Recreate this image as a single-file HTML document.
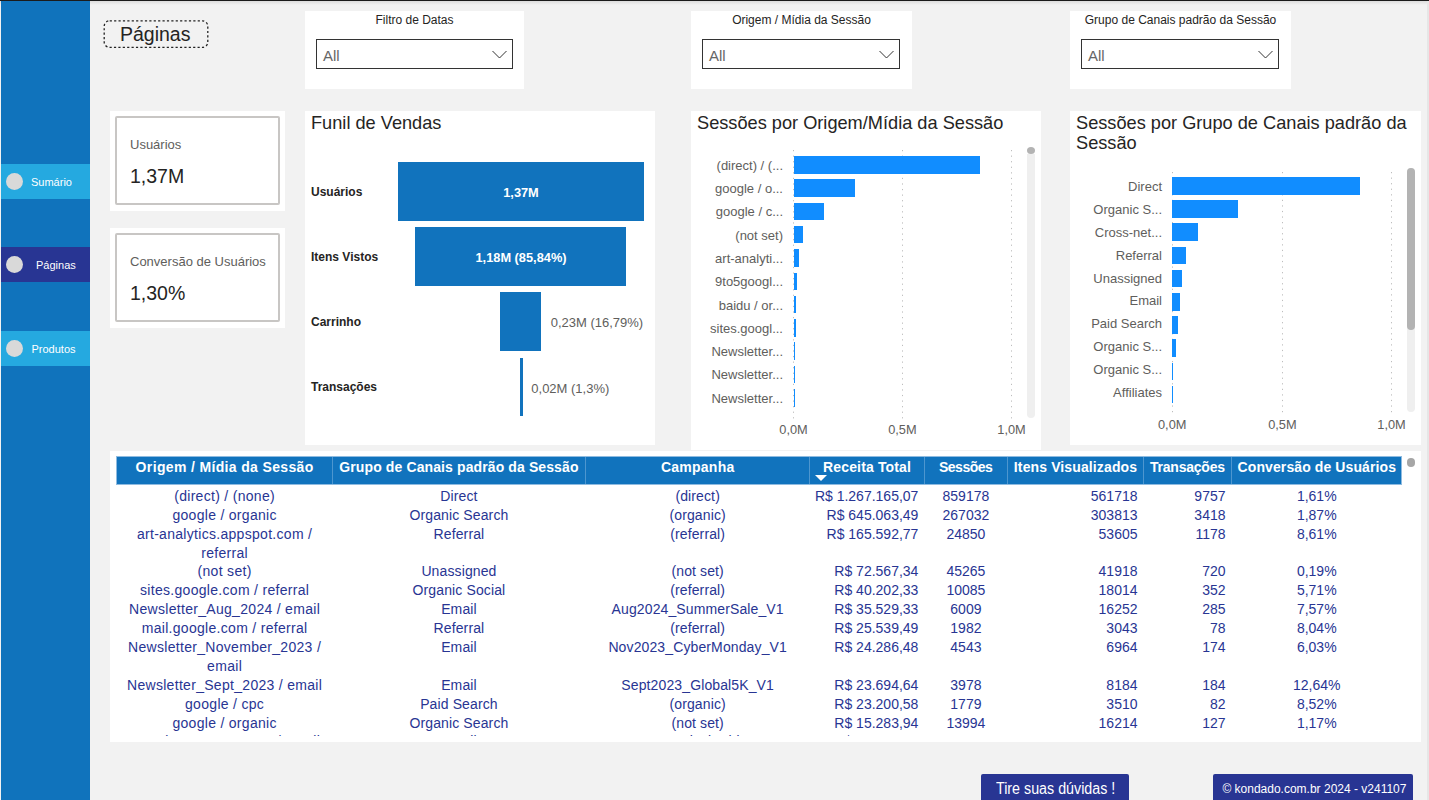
<!DOCTYPE html>
<html><head><meta charset="utf-8">
<style>
*{margin:0;padding:0;box-sizing:border-box}
html,body{width:1429px;height:800px;overflow:hidden;background:#f2f2f2;font-family:"Liberation Sans",sans-serif;position:relative}
.a{position:absolute}
.t{position:absolute;white-space:nowrap;line-height:1}
.card{position:absolute;background:#fff}
.nav{position:absolute;left:1px;width:89px;height:35px}
.nav .c{position:absolute;left:5px;top:9px;width:17px;height:17px;border-radius:50%;background:#d9d9d9}
</style></head><body>
<div class="a" style="left:0;top:0;width:1429px;height:1px;background:#1b1b1b"></div>
<div class="a" style="left:0;top:1px;width:1429px;height:4px;background:linear-gradient(#dcdcdc,#f2f2f2)"></div>
<div class="a" style="left:1427px;top:1px;width:2px;height:799px;background:#e6e6e6"></div>
<div class="a" style="left:1px;top:1px;width:89px;height:799px;background:#1073bc"></div>
<div class="nav" style="top:164px;background:#25a9e0"><div class="c"></div></div>
<div class="t" style="top:177px;font-size:11px;color:#fff;left:31px;">Sumário</div>
<div class="nav" style="top:247px;background:#283593"><div class="c"></div></div>
<div class="t" style="top:260px;font-size:11px;color:#fff;left:36px;">Páginas</div>
<div class="nav" style="top:331px;background:#25a9e0"><div class="c"></div></div>
<div class="t" style="top:344px;font-size:11px;color:#fff;left:31.5px;">Produtos</div>
<svg class="a" style="left:103px;top:20px" width="106" height="29" viewBox="0 0 106 29"><rect x="1.2" y="0.8" width="103.6" height="26.6" rx="5.5" fill="none" stroke="#222" stroke-width="1.3" stroke-dasharray="2.2 2.2"/></svg>
<div class="t" style="top:25px;font-size:19.5px;color:#252423;left:120px;">Páginas</div>
<div class="card" style="left:305px;top:11px;width:219px;height:78px"></div>
<div class="t" style="top:14px;font-size:12px;color:#252423;left:305px;width:219px;text-align:center;">Filtro de Datas</div>
<div class="a" style="left:316px;top:39px;width:197px;height:30px;border:1.5px solid #333;background:#fff"></div>
<div class="t" style="top:48px;font-size:15px;color:#666;left:323px;">All</div>
<svg class="a" style="left:492px;top:50px" width="15" height="9" viewBox="0 0 15 9"><path d="M0.5 1 L7.5 8 L14.5 1" fill="none" stroke="#333" stroke-width="1"/></svg>
<div class="card" style="left:691px;top:11px;width:221px;height:78px"></div>
<div class="t" style="top:14px;font-size:12px;color:#252423;left:691px;width:221px;text-align:center;">Origem / Mídia da Sessão</div>
<div class="a" style="left:702px;top:39px;width:198px;height:30px;border:1.5px solid #333;background:#fff"></div>
<div class="t" style="top:48px;font-size:15px;color:#666;left:709px;">All</div>
<svg class="a" style="left:879px;top:50px" width="15" height="9" viewBox="0 0 15 9"><path d="M0.5 1 L7.5 8 L14.5 1" fill="none" stroke="#333" stroke-width="1"/></svg>
<div class="card" style="left:1070px;top:11px;width:221px;height:78px"></div>
<div class="t" style="top:14px;font-size:12px;color:#252423;left:1070px;width:221px;text-align:center;">Grupo de Canais padrão da Sessão</div>
<div class="a" style="left:1081px;top:39px;width:198px;height:30px;border:1.5px solid #333;background:#fff"></div>
<div class="t" style="top:48px;font-size:15px;color:#666;left:1088px;">All</div>
<svg class="a" style="left:1258px;top:50px" width="15" height="9" viewBox="0 0 15 9"><path d="M0.5 1 L7.5 8 L14.5 1" fill="none" stroke="#333" stroke-width="1"/></svg>
<div class="card" style="left:110px;top:111px;width:175px;height:100px"></div>
<div class="a" style="left:115px;top:116px;width:165px;height:89px;border:2px solid #c8c6c4;border-radius:2px"></div>
<div class="t" style="top:138px;font-size:13px;color:#605e5c;left:130px;">Usuários</div>
<div class="t" style="top:167px;font-size:19.5px;color:#252423;left:130px;">1,37M</div>
<div class="card" style="left:110px;top:228px;width:175px;height:100px"></div>
<div class="a" style="left:115px;top:233px;width:165px;height:89px;border:2px solid #c8c6c4;border-radius:2px"></div>
<div class="t" style="top:255px;font-size:13px;color:#605e5c;left:130px;">Conversão de Usuários</div>
<div class="t" style="top:284px;font-size:19.5px;color:#252423;left:130px;">1,30%</div>
<div class="card" style="left:305px;top:111px;width:350px;height:334px"></div>
<div class="t" style="top:114px;font-size:18.2px;color:#252423;left:311px;">Funil de Vendas</div>
<div class="a" style="left:398px;top:162px;width:246px;height:59px;background:#1173bd"></div>
<div class="a" style="left:415px;top:227px;width:211px;height:59px;background:#1173bd"></div>
<div class="a" style="left:500px;top:292px;width:41px;height:59px;background:#1173bd"></div>
<div class="a" style="left:519.5px;top:358px;width:3px;height:58px;background:#1173bd"></div>
<div class="t" style="top:186px;font-size:12px;color:#252423;font-weight:700;left:311px;">Usuários</div>
<div class="t" style="top:251px;font-size:12px;color:#252423;font-weight:700;left:311px;">Itens Vistos</div>
<div class="t" style="top:316px;font-size:12px;color:#252423;font-weight:700;left:311px;">Carrinho</div>
<div class="t" style="top:381px;font-size:12px;color:#252423;font-weight:700;left:311px;">Transações</div>
<div class="t" style="top:187px;font-size:12.8px;color:#fff;font-weight:700;left:421px;width:200px;text-align:center;">1,37M</div>
<div class="t" style="top:252px;font-size:12.8px;color:#fff;font-weight:700;left:421px;width:200px;text-align:center;">1,18M (85,84%)</div>
<div class="t" style="top:316px;font-size:13px;color:#605e5c;left:550.7px;">0,23M (16,79%)</div>
<div class="t" style="top:382px;font-size:13px;color:#605e5c;left:531.3px;">0,02M (1,3%)</div>
<div class="card" style="left:691px;top:111px;width:350px;height:339px"></div>
<div class="t" style="top:114px;font-size:18.2px;color:#252423;left:697px;">Sessões por Origem/Mídia da Sessão</div>
<svg class="a" style="left:793px;top:149.70px" width="1" height="269" fill="#bdbdbd"><rect x="0" y="0.00" width="1" height="1.2"/><rect x="0" y="5.57" width="1" height="1.2"/><rect x="0" y="11.13" width="1" height="1.2"/><rect x="0" y="16.70" width="1" height="1.2"/><rect x="0" y="22.27" width="1" height="1.2"/><rect x="0" y="27.83" width="1" height="1.2"/><rect x="0" y="33.40" width="1" height="1.2"/><rect x="0" y="38.97" width="1" height="1.2"/><rect x="0" y="44.53" width="1" height="1.2"/><rect x="0" y="50.10" width="1" height="1.2"/><rect x="0" y="55.67" width="1" height="1.2"/><rect x="0" y="61.23" width="1" height="1.2"/><rect x="0" y="66.80" width="1" height="1.2"/><rect x="0" y="72.37" width="1" height="1.2"/><rect x="0" y="77.93" width="1" height="1.2"/><rect x="0" y="83.50" width="1" height="1.2"/><rect x="0" y="89.07" width="1" height="1.2"/><rect x="0" y="94.63" width="1" height="1.2"/><rect x="0" y="100.20" width="1" height="1.2"/><rect x="0" y="105.77" width="1" height="1.2"/><rect x="0" y="111.33" width="1" height="1.2"/><rect x="0" y="116.90" width="1" height="1.2"/><rect x="0" y="122.47" width="1" height="1.2"/><rect x="0" y="128.03" width="1" height="1.2"/><rect x="0" y="133.60" width="1" height="1.2"/><rect x="0" y="139.17" width="1" height="1.2"/><rect x="0" y="144.73" width="1" height="1.2"/><rect x="0" y="150.30" width="1" height="1.2"/><rect x="0" y="155.87" width="1" height="1.2"/><rect x="0" y="161.43" width="1" height="1.2"/><rect x="0" y="167.00" width="1" height="1.2"/><rect x="0" y="172.57" width="1" height="1.2"/><rect x="0" y="178.13" width="1" height="1.2"/><rect x="0" y="183.70" width="1" height="1.2"/><rect x="0" y="189.27" width="1" height="1.2"/><rect x="0" y="194.83" width="1" height="1.2"/><rect x="0" y="200.40" width="1" height="1.2"/><rect x="0" y="205.97" width="1" height="1.2"/><rect x="0" y="211.53" width="1" height="1.2"/><rect x="0" y="217.10" width="1" height="1.2"/><rect x="0" y="222.67" width="1" height="1.2"/><rect x="0" y="228.23" width="1" height="1.2"/><rect x="0" y="233.80" width="1" height="1.2"/><rect x="0" y="239.37" width="1" height="1.2"/><rect x="0" y="244.93" width="1" height="1.2"/><rect x="0" y="250.50" width="1" height="1.2"/><rect x="0" y="256.07" width="1" height="1.2"/><rect x="0" y="261.63" width="1" height="1.2"/><rect x="0" y="267.20" width="1" height="1.2"/></svg>
<svg class="a" style="left:902px;top:149.70px" width="1" height="269" fill="#bdbdbd"><rect x="0" y="0.00" width="1" height="1.2"/><rect x="0" y="5.57" width="1" height="1.2"/><rect x="0" y="11.13" width="1" height="1.2"/><rect x="0" y="16.70" width="1" height="1.2"/><rect x="0" y="22.27" width="1" height="1.2"/><rect x="0" y="27.83" width="1" height="1.2"/><rect x="0" y="33.40" width="1" height="1.2"/><rect x="0" y="38.97" width="1" height="1.2"/><rect x="0" y="44.53" width="1" height="1.2"/><rect x="0" y="50.10" width="1" height="1.2"/><rect x="0" y="55.67" width="1" height="1.2"/><rect x="0" y="61.23" width="1" height="1.2"/><rect x="0" y="66.80" width="1" height="1.2"/><rect x="0" y="72.37" width="1" height="1.2"/><rect x="0" y="77.93" width="1" height="1.2"/><rect x="0" y="83.50" width="1" height="1.2"/><rect x="0" y="89.07" width="1" height="1.2"/><rect x="0" y="94.63" width="1" height="1.2"/><rect x="0" y="100.20" width="1" height="1.2"/><rect x="0" y="105.77" width="1" height="1.2"/><rect x="0" y="111.33" width="1" height="1.2"/><rect x="0" y="116.90" width="1" height="1.2"/><rect x="0" y="122.47" width="1" height="1.2"/><rect x="0" y="128.03" width="1" height="1.2"/><rect x="0" y="133.60" width="1" height="1.2"/><rect x="0" y="139.17" width="1" height="1.2"/><rect x="0" y="144.73" width="1" height="1.2"/><rect x="0" y="150.30" width="1" height="1.2"/><rect x="0" y="155.87" width="1" height="1.2"/><rect x="0" y="161.43" width="1" height="1.2"/><rect x="0" y="167.00" width="1" height="1.2"/><rect x="0" y="172.57" width="1" height="1.2"/><rect x="0" y="178.13" width="1" height="1.2"/><rect x="0" y="183.70" width="1" height="1.2"/><rect x="0" y="189.27" width="1" height="1.2"/><rect x="0" y="194.83" width="1" height="1.2"/><rect x="0" y="200.40" width="1" height="1.2"/><rect x="0" y="205.97" width="1" height="1.2"/><rect x="0" y="211.53" width="1" height="1.2"/><rect x="0" y="217.10" width="1" height="1.2"/><rect x="0" y="222.67" width="1" height="1.2"/><rect x="0" y="228.23" width="1" height="1.2"/><rect x="0" y="233.80" width="1" height="1.2"/><rect x="0" y="239.37" width="1" height="1.2"/><rect x="0" y="244.93" width="1" height="1.2"/><rect x="0" y="250.50" width="1" height="1.2"/><rect x="0" y="256.07" width="1" height="1.2"/><rect x="0" y="261.63" width="1" height="1.2"/><rect x="0" y="267.20" width="1" height="1.2"/></svg>
<svg class="a" style="left:1011px;top:149.70px" width="1" height="269" fill="#bdbdbd"><rect x="0" y="0.00" width="1" height="1.2"/><rect x="0" y="5.57" width="1" height="1.2"/><rect x="0" y="11.13" width="1" height="1.2"/><rect x="0" y="16.70" width="1" height="1.2"/><rect x="0" y="22.27" width="1" height="1.2"/><rect x="0" y="27.83" width="1" height="1.2"/><rect x="0" y="33.40" width="1" height="1.2"/><rect x="0" y="38.97" width="1" height="1.2"/><rect x="0" y="44.53" width="1" height="1.2"/><rect x="0" y="50.10" width="1" height="1.2"/><rect x="0" y="55.67" width="1" height="1.2"/><rect x="0" y="61.23" width="1" height="1.2"/><rect x="0" y="66.80" width="1" height="1.2"/><rect x="0" y="72.37" width="1" height="1.2"/><rect x="0" y="77.93" width="1" height="1.2"/><rect x="0" y="83.50" width="1" height="1.2"/><rect x="0" y="89.07" width="1" height="1.2"/><rect x="0" y="94.63" width="1" height="1.2"/><rect x="0" y="100.20" width="1" height="1.2"/><rect x="0" y="105.77" width="1" height="1.2"/><rect x="0" y="111.33" width="1" height="1.2"/><rect x="0" y="116.90" width="1" height="1.2"/><rect x="0" y="122.47" width="1" height="1.2"/><rect x="0" y="128.03" width="1" height="1.2"/><rect x="0" y="133.60" width="1" height="1.2"/><rect x="0" y="139.17" width="1" height="1.2"/><rect x="0" y="144.73" width="1" height="1.2"/><rect x="0" y="150.30" width="1" height="1.2"/><rect x="0" y="155.87" width="1" height="1.2"/><rect x="0" y="161.43" width="1" height="1.2"/><rect x="0" y="167.00" width="1" height="1.2"/><rect x="0" y="172.57" width="1" height="1.2"/><rect x="0" y="178.13" width="1" height="1.2"/><rect x="0" y="183.70" width="1" height="1.2"/><rect x="0" y="189.27" width="1" height="1.2"/><rect x="0" y="194.83" width="1" height="1.2"/><rect x="0" y="200.40" width="1" height="1.2"/><rect x="0" y="205.97" width="1" height="1.2"/><rect x="0" y="211.53" width="1" height="1.2"/><rect x="0" y="217.10" width="1" height="1.2"/><rect x="0" y="222.67" width="1" height="1.2"/><rect x="0" y="228.23" width="1" height="1.2"/><rect x="0" y="233.80" width="1" height="1.2"/><rect x="0" y="239.37" width="1" height="1.2"/><rect x="0" y="244.93" width="1" height="1.2"/><rect x="0" y="250.50" width="1" height="1.2"/><rect x="0" y="256.07" width="1" height="1.2"/><rect x="0" y="261.63" width="1" height="1.2"/><rect x="0" y="267.20" width="1" height="1.2"/></svg>
<div class="a" style="left:793.5px;top:156.00px;width:186.80px;height:17.6px;background:#118dff"></div>
<div class="t" style="top:159px;font-size:13px;color:#605e5c;right:646px;">(direct) / (...</div>
<div class="a" style="left:793.5px;top:179.30px;width:61.50px;height:17.6px;background:#118dff"></div>
<div class="t" style="top:182px;font-size:13px;color:#605e5c;right:646px;">google / o...</div>
<div class="a" style="left:793.5px;top:202.60px;width:30.10px;height:17.6px;background:#118dff"></div>
<div class="t" style="top:205px;font-size:13px;color:#605e5c;right:646px;">google / c...</div>
<div class="a" style="left:793.5px;top:225.90px;width:9.90px;height:17.6px;background:#118dff"></div>
<div class="t" style="top:229px;font-size:13px;color:#605e5c;right:646px;">(not set)</div>
<div class="a" style="left:793.5px;top:249.20px;width:5.50px;height:17.6px;background:#118dff"></div>
<div class="t" style="top:252px;font-size:13px;color:#605e5c;right:646px;">art-analyti...</div>
<div class="a" style="left:793.5px;top:272.50px;width:3.50px;height:17.6px;background:#118dff"></div>
<div class="t" style="top:275px;font-size:13px;color:#605e5c;right:646px;">9to5googl...</div>
<div class="a" style="left:793.5px;top:295.80px;width:2.80px;height:17.6px;background:#118dff"></div>
<div class="t" style="top:299px;font-size:13px;color:#605e5c;right:646px;">baidu / or...</div>
<div class="a" style="left:793.5px;top:319.10px;width:2.30px;height:17.6px;background:#118dff"></div>
<div class="t" style="top:322px;font-size:13px;color:#605e5c;right:646px;">sites.googl...</div>
<div class="a" style="left:793.5px;top:342.40px;width:1.60px;height:17.6px;background:#118dff"></div>
<div class="t" style="top:345px;font-size:13px;color:#605e5c;right:646px;">Newsletter...</div>
<div class="a" style="left:793.5px;top:365.70px;width:1.50px;height:17.6px;background:#118dff"></div>
<div class="t" style="top:368px;font-size:13px;color:#605e5c;right:646px;">Newsletter...</div>
<div class="a" style="left:793.5px;top:389.00px;width:1.40px;height:17.6px;background:#118dff"></div>
<div class="t" style="top:392px;font-size:13px;color:#605e5c;right:646px;">Newsletter...</div>
<div class="t" style="top:424px;font-size:12.8px;color:#605e5c;left:743.5px;width:100px;text-align:center;">0,0M</div>
<div class="t" style="top:424px;font-size:12.8px;color:#605e5c;left:852.4px;width:100px;text-align:center;">0,5M</div>
<div class="t" style="top:424px;font-size:12.8px;color:#605e5c;left:961.5px;width:100px;text-align:center;">1,0M</div>
<div class="a" style="left:1027px;top:154px;width:8px;height:264px;background:#efefef;border-radius:0 0 4px 4px"></div>
<div class="a" style="left:1027px;top:147px;width:8px;height:7px;background:#b3b3b3;border-radius:50%"></div>
<div class="card" style="left:1070px;top:111px;width:351px;height:334px"></div>
<div class="t" style="top:114px;font-size:18.2px;color:#252423;left:1076px;">Sessões por Grupo de Canais padrão da</div>
<div class="t" style="top:134px;font-size:18.2px;color:#252423;left:1076px;">Sessão</div>
<svg class="a" style="left:1172px;top:172.40px" width="1" height="241" fill="#bdbdbd"><rect x="0" y="0.00" width="1" height="1.2"/><rect x="0" y="5.56" width="1" height="1.2"/><rect x="0" y="11.12" width="1" height="1.2"/><rect x="0" y="16.67" width="1" height="1.2"/><rect x="0" y="22.23" width="1" height="1.2"/><rect x="0" y="27.79" width="1" height="1.2"/><rect x="0" y="33.35" width="1" height="1.2"/><rect x="0" y="38.91" width="1" height="1.2"/><rect x="0" y="44.47" width="1" height="1.2"/><rect x="0" y="50.02" width="1" height="1.2"/><rect x="0" y="55.58" width="1" height="1.2"/><rect x="0" y="61.14" width="1" height="1.2"/><rect x="0" y="66.70" width="1" height="1.2"/><rect x="0" y="72.26" width="1" height="1.2"/><rect x="0" y="77.81" width="1" height="1.2"/><rect x="0" y="83.37" width="1" height="1.2"/><rect x="0" y="88.93" width="1" height="1.2"/><rect x="0" y="94.49" width="1" height="1.2"/><rect x="0" y="100.05" width="1" height="1.2"/><rect x="0" y="105.60" width="1" height="1.2"/><rect x="0" y="111.16" width="1" height="1.2"/><rect x="0" y="116.72" width="1" height="1.2"/><rect x="0" y="122.28" width="1" height="1.2"/><rect x="0" y="127.84" width="1" height="1.2"/><rect x="0" y="133.40" width="1" height="1.2"/><rect x="0" y="138.95" width="1" height="1.2"/><rect x="0" y="144.51" width="1" height="1.2"/><rect x="0" y="150.07" width="1" height="1.2"/><rect x="0" y="155.63" width="1" height="1.2"/><rect x="0" y="161.19" width="1" height="1.2"/><rect x="0" y="166.74" width="1" height="1.2"/><rect x="0" y="172.30" width="1" height="1.2"/><rect x="0" y="177.86" width="1" height="1.2"/><rect x="0" y="183.42" width="1" height="1.2"/><rect x="0" y="188.98" width="1" height="1.2"/><rect x="0" y="194.53" width="1" height="1.2"/><rect x="0" y="200.09" width="1" height="1.2"/><rect x="0" y="205.65" width="1" height="1.2"/><rect x="0" y="211.21" width="1" height="1.2"/><rect x="0" y="216.77" width="1" height="1.2"/><rect x="0" y="222.33" width="1" height="1.2"/><rect x="0" y="227.88" width="1" height="1.2"/><rect x="0" y="233.44" width="1" height="1.2"/><rect x="0" y="239.00" width="1" height="1.2"/></svg>
<svg class="a" style="left:1282px;top:172.40px" width="1" height="241" fill="#bdbdbd"><rect x="0" y="0.00" width="1" height="1.2"/><rect x="0" y="5.56" width="1" height="1.2"/><rect x="0" y="11.12" width="1" height="1.2"/><rect x="0" y="16.67" width="1" height="1.2"/><rect x="0" y="22.23" width="1" height="1.2"/><rect x="0" y="27.79" width="1" height="1.2"/><rect x="0" y="33.35" width="1" height="1.2"/><rect x="0" y="38.91" width="1" height="1.2"/><rect x="0" y="44.47" width="1" height="1.2"/><rect x="0" y="50.02" width="1" height="1.2"/><rect x="0" y="55.58" width="1" height="1.2"/><rect x="0" y="61.14" width="1" height="1.2"/><rect x="0" y="66.70" width="1" height="1.2"/><rect x="0" y="72.26" width="1" height="1.2"/><rect x="0" y="77.81" width="1" height="1.2"/><rect x="0" y="83.37" width="1" height="1.2"/><rect x="0" y="88.93" width="1" height="1.2"/><rect x="0" y="94.49" width="1" height="1.2"/><rect x="0" y="100.05" width="1" height="1.2"/><rect x="0" y="105.60" width="1" height="1.2"/><rect x="0" y="111.16" width="1" height="1.2"/><rect x="0" y="116.72" width="1" height="1.2"/><rect x="0" y="122.28" width="1" height="1.2"/><rect x="0" y="127.84" width="1" height="1.2"/><rect x="0" y="133.40" width="1" height="1.2"/><rect x="0" y="138.95" width="1" height="1.2"/><rect x="0" y="144.51" width="1" height="1.2"/><rect x="0" y="150.07" width="1" height="1.2"/><rect x="0" y="155.63" width="1" height="1.2"/><rect x="0" y="161.19" width="1" height="1.2"/><rect x="0" y="166.74" width="1" height="1.2"/><rect x="0" y="172.30" width="1" height="1.2"/><rect x="0" y="177.86" width="1" height="1.2"/><rect x="0" y="183.42" width="1" height="1.2"/><rect x="0" y="188.98" width="1" height="1.2"/><rect x="0" y="194.53" width="1" height="1.2"/><rect x="0" y="200.09" width="1" height="1.2"/><rect x="0" y="205.65" width="1" height="1.2"/><rect x="0" y="211.21" width="1" height="1.2"/><rect x="0" y="216.77" width="1" height="1.2"/><rect x="0" y="222.33" width="1" height="1.2"/><rect x="0" y="227.88" width="1" height="1.2"/><rect x="0" y="233.44" width="1" height="1.2"/><rect x="0" y="239.00" width="1" height="1.2"/></svg>
<svg class="a" style="left:1391px;top:172.40px" width="1" height="241" fill="#bdbdbd"><rect x="0" y="0.00" width="1" height="1.2"/><rect x="0" y="5.56" width="1" height="1.2"/><rect x="0" y="11.12" width="1" height="1.2"/><rect x="0" y="16.67" width="1" height="1.2"/><rect x="0" y="22.23" width="1" height="1.2"/><rect x="0" y="27.79" width="1" height="1.2"/><rect x="0" y="33.35" width="1" height="1.2"/><rect x="0" y="38.91" width="1" height="1.2"/><rect x="0" y="44.47" width="1" height="1.2"/><rect x="0" y="50.02" width="1" height="1.2"/><rect x="0" y="55.58" width="1" height="1.2"/><rect x="0" y="61.14" width="1" height="1.2"/><rect x="0" y="66.70" width="1" height="1.2"/><rect x="0" y="72.26" width="1" height="1.2"/><rect x="0" y="77.81" width="1" height="1.2"/><rect x="0" y="83.37" width="1" height="1.2"/><rect x="0" y="88.93" width="1" height="1.2"/><rect x="0" y="94.49" width="1" height="1.2"/><rect x="0" y="100.05" width="1" height="1.2"/><rect x="0" y="105.60" width="1" height="1.2"/><rect x="0" y="111.16" width="1" height="1.2"/><rect x="0" y="116.72" width="1" height="1.2"/><rect x="0" y="122.28" width="1" height="1.2"/><rect x="0" y="127.84" width="1" height="1.2"/><rect x="0" y="133.40" width="1" height="1.2"/><rect x="0" y="138.95" width="1" height="1.2"/><rect x="0" y="144.51" width="1" height="1.2"/><rect x="0" y="150.07" width="1" height="1.2"/><rect x="0" y="155.63" width="1" height="1.2"/><rect x="0" y="161.19" width="1" height="1.2"/><rect x="0" y="166.74" width="1" height="1.2"/><rect x="0" y="172.30" width="1" height="1.2"/><rect x="0" y="177.86" width="1" height="1.2"/><rect x="0" y="183.42" width="1" height="1.2"/><rect x="0" y="188.98" width="1" height="1.2"/><rect x="0" y="194.53" width="1" height="1.2"/><rect x="0" y="200.09" width="1" height="1.2"/><rect x="0" y="205.65" width="1" height="1.2"/><rect x="0" y="211.21" width="1" height="1.2"/><rect x="0" y="216.77" width="1" height="1.2"/><rect x="0" y="222.33" width="1" height="1.2"/><rect x="0" y="227.88" width="1" height="1.2"/><rect x="0" y="233.44" width="1" height="1.2"/><rect x="0" y="239.00" width="1" height="1.2"/></svg>
<div class="a" style="left:1172.2px;top:177.00px;width:187.70px;height:17.6px;background:#118dff"></div>
<div class="t" style="top:180px;font-size:13px;color:#605e5c;right:267px;">Direct</div>
<div class="a" style="left:1172.2px;top:200.20px;width:65.70px;height:17.6px;background:#118dff"></div>
<div class="t" style="top:203px;font-size:13px;color:#605e5c;right:267px;">Organic S...</div>
<div class="a" style="left:1172.2px;top:223.40px;width:25.40px;height:17.6px;background:#118dff"></div>
<div class="t" style="top:226px;font-size:13px;color:#605e5c;right:267px;">Cross-net...</div>
<div class="a" style="left:1172.2px;top:246.60px;width:13.60px;height:17.6px;background:#118dff"></div>
<div class="t" style="top:249px;font-size:13px;color:#605e5c;right:267px;">Referral</div>
<div class="a" style="left:1172.2px;top:269.80px;width:10.20px;height:17.6px;background:#118dff"></div>
<div class="t" style="top:272px;font-size:13px;color:#605e5c;right:267px;">Unassigned</div>
<div class="a" style="left:1172.2px;top:293.00px;width:7.60px;height:17.6px;background:#118dff"></div>
<div class="t" style="top:294px;font-size:13px;color:#605e5c;right:267px;">Email</div>
<div class="a" style="left:1172.2px;top:316.20px;width:5.60px;height:17.6px;background:#118dff"></div>
<div class="t" style="top:317px;font-size:13px;color:#605e5c;right:267px;">Paid Search</div>
<div class="a" style="left:1172.2px;top:339.40px;width:3.60px;height:17.6px;background:#118dff"></div>
<div class="t" style="top:340px;font-size:13px;color:#605e5c;right:267px;">Organic S...</div>
<div class="a" style="left:1172.2px;top:362.60px;width:1.20px;height:17.6px;background:#118dff"></div>
<div class="t" style="top:363px;font-size:13px;color:#605e5c;right:267px;">Organic S...</div>
<div class="a" style="left:1172.2px;top:385.80px;width:1.20px;height:17.6px;background:#118dff"></div>
<div class="t" style="top:386px;font-size:13px;color:#605e5c;right:267px;">Affiliates</div>
<div class="t" style="top:419px;font-size:12.8px;color:#605e5c;left:1122.2px;width:100px;text-align:center;">0,0M</div>
<div class="t" style="top:419px;font-size:12.8px;color:#605e5c;left:1232.4px;width:100px;text-align:center;">0,5M</div>
<div class="t" style="top:419px;font-size:12.8px;color:#605e5c;left:1341.5px;width:100px;text-align:center;">1,0M</div>
<div class="a" style="left:1407px;top:168px;width:8px;height:244px;background:#efefef;border-radius:4px"></div>
<div class="a" style="left:1407px;top:168px;width:8px;height:162px;background:#b3b3b3;border-radius:4px"></div>
<div class="card" style="left:110px;top:451px;width:1311px;height:291px"></div>
<div class="a" style="left:116px;top:456px;width:1286px;height:29px;background:#1173bd;border:1px solid #8fbbe0"></div>
<div class="a" style="left:332px;top:457px;width:1px;height:27px;background:#4d96cf"></div>
<div class="a" style="left:585px;top:457px;width:1px;height:27px;background:#4d96cf"></div>
<div class="a" style="left:809px;top:457px;width:1px;height:27px;background:#4d96cf"></div>
<div class="a" style="left:924px;top:457px;width:1px;height:27px;background:#4d96cf"></div>
<div class="a" style="left:1007px;top:457px;width:1px;height:27px;background:#4d96cf"></div>
<div class="a" style="left:1143px;top:457px;width:1px;height:27px;background:#4d96cf"></div>
<div class="a" style="left:1231px;top:457px;width:1px;height:27px;background:#4d96cf"></div>
<div class="t" style="top:460px;font-size:14px;color:#fff;font-weight:700;left:116.875px;width:215.5px;text-align:center;letter-spacing:0.35px;">Origem / Mídia da Sessão</div>
<div class="t" style="top:460px;font-size:14px;color:#fff;font-weight:700;left:332.255px;width:253.4px;text-align:center;letter-spacing:0.11px;">Grupo de Canais padrão da Sessão</div>
<div class="t" style="top:460px;font-size:14px;color:#fff;font-weight:700;left:585.725px;width:224.0px;text-align:center;letter-spacing:0.25px;">Campanha</div>
<div class="t" style="top:460px;font-size:14px;color:#fff;font-weight:700;left:809.6750000000001px;width:114.8px;text-align:center;letter-spacing:0.15px;">Receita Total</div>
<div class="t" style="top:460px;font-size:14px;color:#fff;font-weight:700;left:924.15px;width:83.0px;text-align:center;letter-spacing:-0.5px;">Sessões</div>
<div class="t" style="top:460px;font-size:14px;color:#fff;font-weight:700;left:1007.4599999999999px;width:136.1px;text-align:center;letter-spacing:0.12px;">Itens Visualizados</div>
<div class="t" style="top:460px;font-size:14px;color:#fff;font-weight:700;left:1143.395px;width:88.0px;text-align:center;letter-spacing:-0.21px;">Transações</div>
<div class="t" style="top:460px;font-size:14px;color:#fff;font-weight:700;left:1231.55px;width:170.5px;text-align:center;letter-spacing:0.1px;">Conversão de Usuários</div>
<svg class="a" style="left:815px;top:475px" width="12" height="6" viewBox="0 0 12 6"><path d="M0 0H12L6 6Z" fill="#fff"/></svg>
<div class="a" style="left:110px;top:486px;width:1300px;height:250px;overflow:hidden">
<div class="a" style="left:-110px;top:-486px;width:1429px;height:800px">
<div class="t" style="top:489px;font-size:14px;color:#283593;left:116.85000000000001px;width:215.5px;text-align:center;letter-spacing:0.3px;">(direct) / (none)</div>
<div class="t" style="top:489px;font-size:14px;color:#283593;left:332.26px;width:253.4px;text-align:center;letter-spacing:0.12px;">Direct</div>
<div class="t" style="top:489px;font-size:14px;color:#283593;left:585.66px;width:224.0px;text-align:center;letter-spacing:0.12px;">(direct)</div>
<div class="t" style="top:489px;font-size:14px;color:#283593;right:510.6px;">R$ 1.267.165,07</div>
<div class="t" style="top:489px;font-size:14px;color:#283593;left:924.4px;width:83.0px;text-align:center;">859178</div>
<div class="t" style="top:489px;font-size:14px;color:#283593;right:291.5px;">561718</div>
<div class="t" style="top:489px;font-size:14px;color:#283593;right:203.5px;">9757</div>
<div class="t" style="top:489px;font-size:14px;color:#283593;left:1231.5px;width:170.5px;text-align:center;">1,61%</div>
<div class="t" style="top:508px;font-size:14px;color:#283593;left:116.85000000000001px;width:215.5px;text-align:center;letter-spacing:0.3px;">google / organic</div>
<div class="t" style="top:508px;font-size:14px;color:#283593;left:332.26px;width:253.4px;text-align:center;letter-spacing:0.12px;">Organic Search</div>
<div class="t" style="top:508px;font-size:14px;color:#283593;left:585.66px;width:224.0px;text-align:center;letter-spacing:0.12px;">(organic)</div>
<div class="t" style="top:508px;font-size:14px;color:#283593;right:510.6px;">R$ 645.063,49</div>
<div class="t" style="top:508px;font-size:14px;color:#283593;left:924.4px;width:83.0px;text-align:center;">267032</div>
<div class="t" style="top:508px;font-size:14px;color:#283593;right:291.5px;">303813</div>
<div class="t" style="top:508px;font-size:14px;color:#283593;right:203.5px;">3418</div>
<div class="t" style="top:508px;font-size:14px;color:#283593;left:1231.5px;width:170.5px;text-align:center;">1,87%</div>
<div class="t" style="top:527px;font-size:14px;color:#283593;left:116.85000000000001px;width:215.5px;text-align:center;letter-spacing:0.3px;">art-analytics.appspot.com /</div>
<div class="t" style="top:546px;font-size:14px;color:#283593;left:116.85000000000001px;width:215.5px;text-align:center;letter-spacing:0.3px;">referral</div>
<div class="t" style="top:527px;font-size:14px;color:#283593;left:332.26px;width:253.4px;text-align:center;letter-spacing:0.12px;">Referral</div>
<div class="t" style="top:527px;font-size:14px;color:#283593;left:585.66px;width:224.0px;text-align:center;letter-spacing:0.12px;">(referral)</div>
<div class="t" style="top:527px;font-size:14px;color:#283593;right:510.6px;">R$ 165.592,77</div>
<div class="t" style="top:527px;font-size:14px;color:#283593;left:924.4px;width:83.0px;text-align:center;">24850</div>
<div class="t" style="top:527px;font-size:14px;color:#283593;right:291.5px;">53605</div>
<div class="t" style="top:527px;font-size:14px;color:#283593;right:203.5px;">1178</div>
<div class="t" style="top:527px;font-size:14px;color:#283593;left:1231.5px;width:170.5px;text-align:center;">8,61%</div>
<div class="t" style="top:564px;font-size:14px;color:#283593;left:116.85000000000001px;width:215.5px;text-align:center;letter-spacing:0.3px;">(not set)</div>
<div class="t" style="top:564px;font-size:14px;color:#283593;left:332.26px;width:253.4px;text-align:center;letter-spacing:0.12px;">Unassigned</div>
<div class="t" style="top:564px;font-size:14px;color:#283593;left:585.66px;width:224.0px;text-align:center;letter-spacing:0.12px;">(not set)</div>
<div class="t" style="top:564px;font-size:14px;color:#283593;right:510.6px;">R$ 72.567,34</div>
<div class="t" style="top:564px;font-size:14px;color:#283593;left:924.4px;width:83.0px;text-align:center;">45265</div>
<div class="t" style="top:564px;font-size:14px;color:#283593;right:291.5px;">41918</div>
<div class="t" style="top:564px;font-size:14px;color:#283593;right:203.5px;">720</div>
<div class="t" style="top:564px;font-size:14px;color:#283593;left:1231.5px;width:170.5px;text-align:center;">0,19%</div>
<div class="t" style="top:583px;font-size:14px;color:#283593;left:116.85000000000001px;width:215.5px;text-align:center;letter-spacing:0.3px;">sites.google.com / referral</div>
<div class="t" style="top:583px;font-size:14px;color:#283593;left:332.26px;width:253.4px;text-align:center;letter-spacing:0.12px;">Organic Social</div>
<div class="t" style="top:583px;font-size:14px;color:#283593;left:585.66px;width:224.0px;text-align:center;letter-spacing:0.12px;">(referral)</div>
<div class="t" style="top:583px;font-size:14px;color:#283593;right:510.6px;">R$ 40.202,33</div>
<div class="t" style="top:583px;font-size:14px;color:#283593;left:924.4px;width:83.0px;text-align:center;">10085</div>
<div class="t" style="top:583px;font-size:14px;color:#283593;right:291.5px;">18014</div>
<div class="t" style="top:583px;font-size:14px;color:#283593;right:203.5px;">352</div>
<div class="t" style="top:583px;font-size:14px;color:#283593;left:1231.5px;width:170.5px;text-align:center;">5,71%</div>
<div class="t" style="top:602px;font-size:14px;color:#283593;left:116.85000000000001px;width:215.5px;text-align:center;letter-spacing:0.3px;">Newsletter_Aug_2024 / email</div>
<div class="t" style="top:602px;font-size:14px;color:#283593;left:332.26px;width:253.4px;text-align:center;letter-spacing:0.12px;">Email</div>
<div class="t" style="top:602px;font-size:14px;color:#283593;left:585.66px;width:224.0px;text-align:center;letter-spacing:0.12px;">Aug2024_SummerSale_V1</div>
<div class="t" style="top:602px;font-size:14px;color:#283593;right:510.6px;">R$ 35.529,33</div>
<div class="t" style="top:602px;font-size:14px;color:#283593;left:924.4px;width:83.0px;text-align:center;">6009</div>
<div class="t" style="top:602px;font-size:14px;color:#283593;right:291.5px;">16252</div>
<div class="t" style="top:602px;font-size:14px;color:#283593;right:203.5px;">285</div>
<div class="t" style="top:602px;font-size:14px;color:#283593;left:1231.5px;width:170.5px;text-align:center;">7,57%</div>
<div class="t" style="top:621px;font-size:14px;color:#283593;left:116.85000000000001px;width:215.5px;text-align:center;letter-spacing:0.3px;">mail.google.com / referral</div>
<div class="t" style="top:621px;font-size:14px;color:#283593;left:332.26px;width:253.4px;text-align:center;letter-spacing:0.12px;">Referral</div>
<div class="t" style="top:621px;font-size:14px;color:#283593;left:585.66px;width:224.0px;text-align:center;letter-spacing:0.12px;">(referral)</div>
<div class="t" style="top:621px;font-size:14px;color:#283593;right:510.6px;">R$ 25.539,49</div>
<div class="t" style="top:621px;font-size:14px;color:#283593;left:924.4px;width:83.0px;text-align:center;">1982</div>
<div class="t" style="top:621px;font-size:14px;color:#283593;right:291.5px;">3043</div>
<div class="t" style="top:621px;font-size:14px;color:#283593;right:203.5px;">78</div>
<div class="t" style="top:621px;font-size:14px;color:#283593;left:1231.5px;width:170.5px;text-align:center;">8,04%</div>
<div class="t" style="top:640px;font-size:14px;color:#283593;left:116.85000000000001px;width:215.5px;text-align:center;letter-spacing:0.3px;">Newsletter_November_2023 /</div>
<div class="t" style="top:659px;font-size:14px;color:#283593;left:116.85000000000001px;width:215.5px;text-align:center;letter-spacing:0.3px;">email</div>
<div class="t" style="top:640px;font-size:14px;color:#283593;left:332.26px;width:253.4px;text-align:center;letter-spacing:0.12px;">Email</div>
<div class="t" style="top:640px;font-size:14px;color:#283593;left:585.66px;width:224.0px;text-align:center;letter-spacing:0.12px;">Nov2023_CyberMonday_V1</div>
<div class="t" style="top:640px;font-size:14px;color:#283593;right:510.6px;">R$ 24.286,48</div>
<div class="t" style="top:640px;font-size:14px;color:#283593;left:924.4px;width:83.0px;text-align:center;">4543</div>
<div class="t" style="top:640px;font-size:14px;color:#283593;right:291.5px;">6964</div>
<div class="t" style="top:640px;font-size:14px;color:#283593;right:203.5px;">174</div>
<div class="t" style="top:640px;font-size:14px;color:#283593;left:1231.5px;width:170.5px;text-align:center;">6,03%</div>
<div class="t" style="top:678px;font-size:14px;color:#283593;left:116.85000000000001px;width:215.5px;text-align:center;letter-spacing:0.3px;">Newsletter_Sept_2023 / email</div>
<div class="t" style="top:678px;font-size:14px;color:#283593;left:332.26px;width:253.4px;text-align:center;letter-spacing:0.12px;">Email</div>
<div class="t" style="top:678px;font-size:14px;color:#283593;left:585.66px;width:224.0px;text-align:center;letter-spacing:0.12px;">Sept2023_Global5K_V1</div>
<div class="t" style="top:678px;font-size:14px;color:#283593;right:510.6px;">R$ 23.694,64</div>
<div class="t" style="top:678px;font-size:14px;color:#283593;left:924.4px;width:83.0px;text-align:center;">3978</div>
<div class="t" style="top:678px;font-size:14px;color:#283593;right:291.5px;">8184</div>
<div class="t" style="top:678px;font-size:14px;color:#283593;right:203.5px;">184</div>
<div class="t" style="top:678px;font-size:14px;color:#283593;left:1231.5px;width:170.5px;text-align:center;">12,64%</div>
<div class="t" style="top:697px;font-size:14px;color:#283593;left:116.85000000000001px;width:215.5px;text-align:center;letter-spacing:0.3px;">google / cpc</div>
<div class="t" style="top:697px;font-size:14px;color:#283593;left:332.26px;width:253.4px;text-align:center;letter-spacing:0.12px;">Paid Search</div>
<div class="t" style="top:697px;font-size:14px;color:#283593;left:585.66px;width:224.0px;text-align:center;letter-spacing:0.12px;">(organic)</div>
<div class="t" style="top:697px;font-size:14px;color:#283593;right:510.6px;">R$ 23.200,58</div>
<div class="t" style="top:697px;font-size:14px;color:#283593;left:924.4px;width:83.0px;text-align:center;">1779</div>
<div class="t" style="top:697px;font-size:14px;color:#283593;right:291.5px;">3510</div>
<div class="t" style="top:697px;font-size:14px;color:#283593;right:203.5px;">82</div>
<div class="t" style="top:697px;font-size:14px;color:#283593;left:1231.5px;width:170.5px;text-align:center;">8,52%</div>
<div class="t" style="top:716px;font-size:14px;color:#283593;left:116.85000000000001px;width:215.5px;text-align:center;letter-spacing:0.3px;">google / organic</div>
<div class="t" style="top:716px;font-size:14px;color:#283593;left:332.26px;width:253.4px;text-align:center;letter-spacing:0.12px;">Organic Search</div>
<div class="t" style="top:716px;font-size:14px;color:#283593;left:585.66px;width:224.0px;text-align:center;letter-spacing:0.12px;">(not set)</div>
<div class="t" style="top:716px;font-size:14px;color:#283593;right:510.6px;">R$ 15.283,94</div>
<div class="t" style="top:716px;font-size:14px;color:#283593;left:924.4px;width:83.0px;text-align:center;">13994</div>
<div class="t" style="top:716px;font-size:14px;color:#283593;right:291.5px;">16214</div>
<div class="t" style="top:716px;font-size:14px;color:#283593;right:203.5px;">127</div>
<div class="t" style="top:716px;font-size:14px;color:#283593;left:1231.5px;width:170.5px;text-align:center;">1,17%</div>
<div class="t" style="top:734px;font-size:14px;color:#283593;left:116.85000000000001px;width:215.5px;text-align:center;letter-spacing:0.3px;">Newsletter_Nov_2024 / email</div>
<div class="t" style="top:734px;font-size:14px;color:#283593;left:332.26px;width:253.4px;text-align:center;letter-spacing:0.12px;">Email</div>
<div class="t" style="top:734px;font-size:14px;color:#283593;left:585.66px;width:224.0px;text-align:center;letter-spacing:0.12px;">Nov2024_BlackFriday_V1</div>
<div class="t" style="top:734px;font-size:14px;color:#283593;right:510.6px;">R$ 14.177,00</div>
<div class="t" style="top:734px;font-size:14px;color:#283593;left:924.4px;width:83.0px;text-align:center;">20007</div>
<div class="t" style="top:734px;font-size:14px;color:#283593;right:291.5px;">23573</div>
<div class="t" style="top:734px;font-size:14px;color:#283593;right:203.5px;">156</div>
<div class="t" style="top:734px;font-size:14px;color:#283593;left:1231.5px;width:170.5px;text-align:center;">0,66%</div>
</div></div>
<div class="a" style="left:1406.5px;top:458px;width:8px;height:9px;background:#a6a6a6;border-radius:4px"></div>
<div class="a" style="left:981px;top:774px;width:148px;height:26px;background:#283593;border-radius:2px 2px 0 0"></div>
<div class="t" style="top:781px;font-size:16px;color:#fff;left:995.6px;transform:scaleX(0.892);transform-origin:0 0;">Tire suas dúvidas !</div>
<div class="a" style="left:1213px;top:774px;width:200px;height:26px;background:#283593;border-radius:2px 2px 0 0"></div>
<div class="t" style="top:783px;font-size:12px;color:#fff;left:1222.4px;">© kondado.com.br 2024 - v241107</div>
</body></html>
